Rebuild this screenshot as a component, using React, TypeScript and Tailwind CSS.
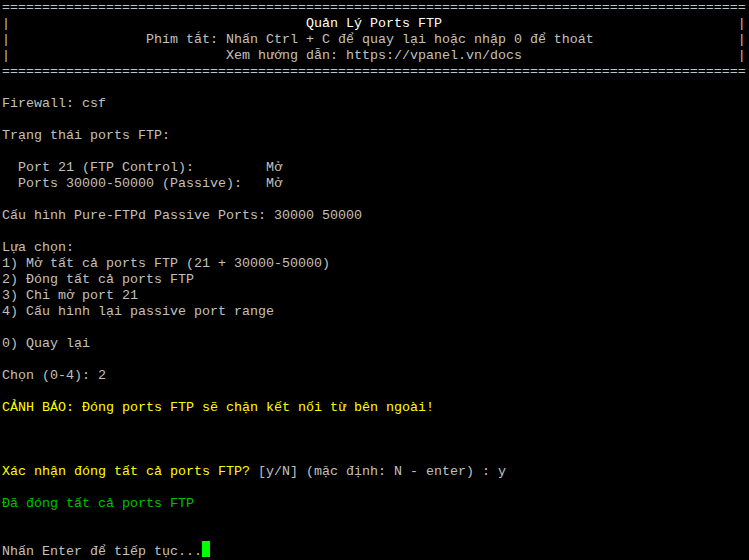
import React from "react";

type Seg = { t: string; c?: string };
const G = "text-[#c0c0c0]";
const W = "text-[#ffffff]";
const Y = "text-[#ffff00]";
const GR = "text-[#00c000]";

const eq = "=".repeat(93);
const box = (inner: string, left: number) => {
  const total = 91;
  const right = total - left - [...inner].length;
  return "|" + " ".repeat(left) + inner + " ".repeat(Math.max(0, right)) + "|";
};

const lines: Seg[][] = [
  [{ t: eq }],
  [{ t: "|" + " ".repeat(37) }, { t: "Quản Lý Ports FTP", c: W }, { t: " ".repeat(37) + "|" }],
  [{ t: box("Phím tắt: Nhấn Ctrl + C để quay lại hoặc nhập 0 để thoát", 17) }],
  [{ t: box("Xem hướng dẫn: https://vpanel.vn/docs", 27) }],
  [{ t: eq }],
  [],
  [{ t: "Firewall: csf" }],
  [],
  [{ t: "Trạng thái ports FTP:" }],
  [],
  [{ t: "  Port 21 (FTP Control):         Mở" }],
  [{ t: "  Ports 30000-50000 (Passive):   Mở" }],
  [],
  [{ t: "Cấu hình Pure-FTPd Passive Ports: 30000 50000" }],
  [],
  [{ t: "Lựa chọn:" }],
  [{ t: "1) Mở tất cả ports FTP (21 + 30000-50000)" }],
  [{ t: "2) Đóng tất cả ports FTP" }],
  [{ t: "3) Chỉ mở port 21" }],
  [{ t: "4) Cấu hình lại passive port range" }],
  [],
  [{ t: "0) Quay lại" }],
  [],
  [{ t: "Chọn (0-4): 2" }],
  [],
  [{ t: "CẢNH BÁO: Đóng ports FTP sẽ chặn kết nối từ bên ngoài!", c: Y }],
  [],
  [],
  [],
  [
    { t: "Xác nhận đóng tất cả ports FTP?", c: Y },
    { t: " [y/N] (mặc định: N - enter) : y" },
  ],
  [],
  [{ t: "Đã đóng tất cả ports FTP", c: GR }],
  [],
  [],
];

export default function App() {
  return (
    <div className="w-[749px] h-[560px] bg-black overflow-hidden">
      <div
        className="pl-[2px] text-[13.3333px] leading-[16px] text-[#c0c0c0]"
        style={{ fontFamily: '"Liberation Mono", "DejaVu Sans Mono", monospace' }}
      >
        {lines.map((segs, i) => (
          <div key={i} className="h-4 whitespace-pre">
            {segs.map((s, j) => (
              <span key={j} className={s.c ?? G}>
                {s.t}
              </span>
            ))}
          </div>
        ))}
        <div className="h-4 whitespace-pre flex items-start">
          <span className={G}>Nhấn Enter để tiếp tục...</span>
          <span className="inline-block w-2 h-4 bg-[#00ff00] -mt-[3px]" />
        </div>
      </div>
    </div>
  );
}
